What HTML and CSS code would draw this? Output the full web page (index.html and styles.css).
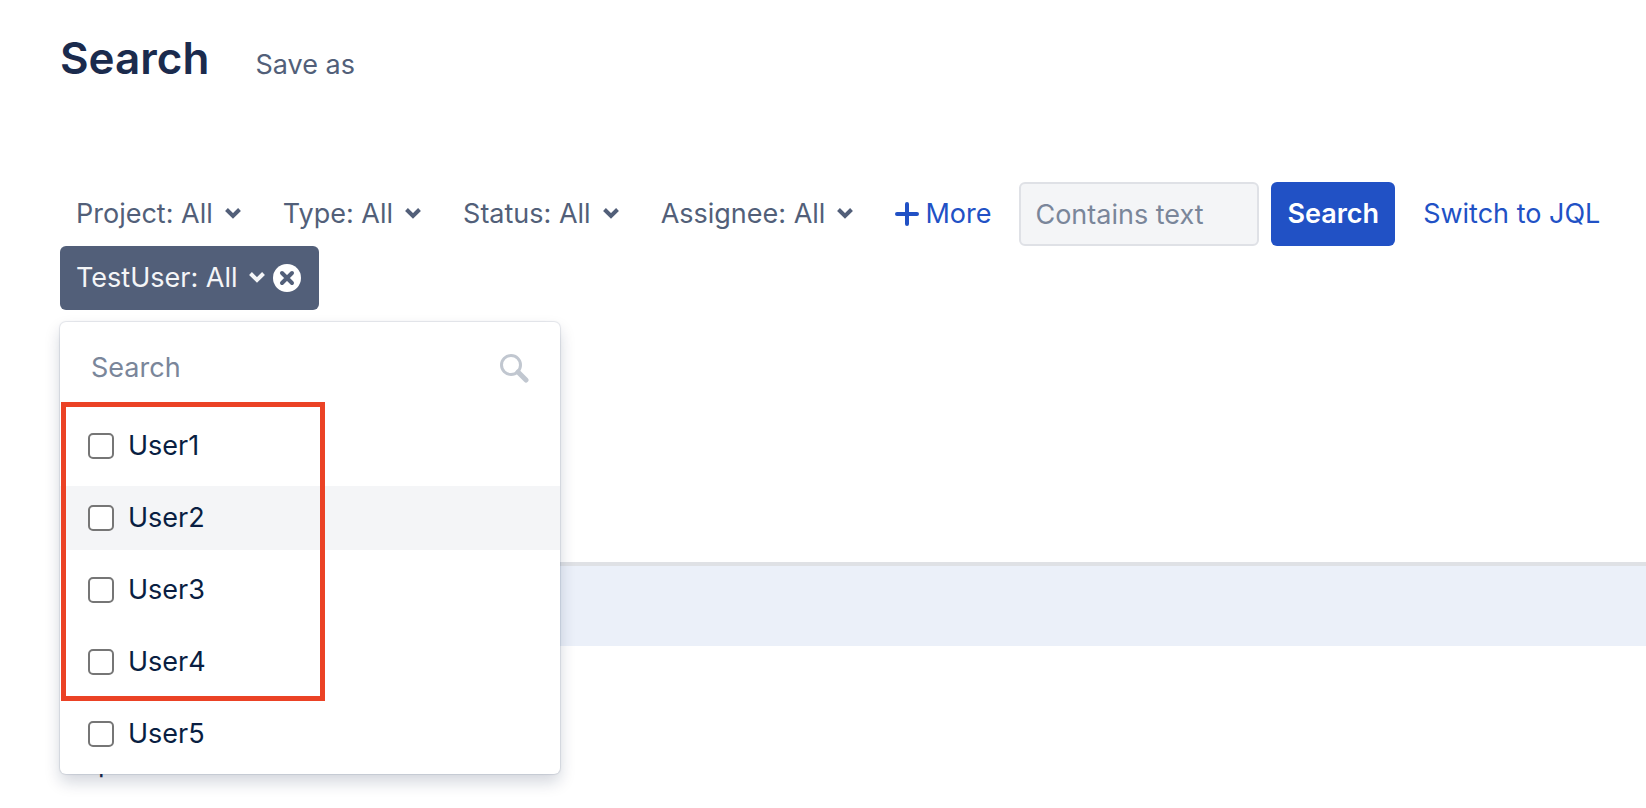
FILE: index.html
```
<!DOCTYPE html>
<html lang="en">
<head>
  <meta charset="UTF-8" />
  <meta name="viewport" content="width=device-width, initial-scale=1.0"/>
  <title>Search</title>
  <link rel="stylesheet" href="styles.css">
</head>
<body>
  <svg class="sprite" aria-hidden="true">
    <symbol id="chevron" viewBox="0 0 16 12">
      <path d="M1.5 1.5L8 8l6.500-6.500" fill="none" stroke="currentColor" stroke-width="4"/>
    </symbol>
  </svg>

  <header class="header">
    <h1>Search</h1>
    <button class="save-as" type="button">Save as</button>
  </header>

  <form class="filters">
    <button class="filter" type="button">Project: All <svg class="chevron"><use href="#chevron"/></svg></button>
    <button class="filter" type="button">Type: All <svg class="chevron"><use href="#chevron"/></svg></button>
    <button class="filter" type="button">Status: All <svg class="chevron"><use href="#chevron"/></svg></button>
    <button class="filter" type="button">Assignee: All <svg class="chevron"><use href="#chevron"/></svg></button>
    <button class="more" type="button">
      <svg class="plus" viewBox="0 0 24 24"><path d="M12 2v20M2 12h20" fill="none" stroke="currentColor" stroke-width="4" stroke-linecap="round"/></svg>
      More
    </button>
    <input class="text-query" type="text" placeholder="Contains text" aria-label="Contains text">
    <button class="search-btn" type="submit">Search</button>
    <a class="switch" href="#">Switch to JQL</a>
  </form>

  <div class="extra">
    <div class="filter active">
      <button class="active-label" type="button">TestUser: All <svg class="chevron"><use href="#chevron"/></svg></button>
      <button class="remove" type="button" aria-label="Remove filter">
        <svg viewBox="0 0 28 28"><circle cx="14" cy="14" r="14" fill="#fff"/><path d="M9 9l10 10M19 9L9 19" stroke="#525f79" stroke-width="4" stroke-linecap="round"/></svg>
      </button>
    </div>

    <div class="dropdown">
      <div class="lookup">
        <input type="text" placeholder="Search" aria-label="Search users">
        <svg class="magnifier" viewBox="0 0 30 30"><circle cx="12" cy="12" r="9.500" fill="none" stroke="#c1c7d0" stroke-width="3"/><path d="M19 19l8 8" stroke="#c1c7d0" stroke-width="5" stroke-linecap="round"/></svg>
      </div>
      <div class="options">
        <label class="option"><input type="checkbox"> User1</label>
        <label class="option hover"><input type="checkbox"> User2</label>
        <label class="option"><input type="checkbox"> User3</label>
        <label class="option"><input type="checkbox"> User4</label>
        <label class="option"><input type="checkbox"> User5</label>
        <div class="highlight"></div>
      </div>
    </div>
  </div>

  <main class="results">
    <div class="band"></div>
    <p class="result">Update</p>
  </main>
</body>
</html>
```

FILE: styles.css
```
* { box-sizing: border-box; }
body {
  margin: 0;
  min-height: 100vh;
  background: #fff;
  color: #091e42;
  font-family: Inter, "Liberation Sans", sans-serif;
  font-size: 27px;
  line-height: 32px;
}
button, input {
  font: inherit;
  color: inherit;
  margin: 0;
}
button {
  padding: 0;
  border: 0;
  background: none;
  cursor: pointer;
  white-space: nowrap;
}
.sprite {
  position: absolute;
  width: 0;
  height: 0;
}
.header {
  display: flex;
  align-items: baseline;
  gap: 46px;
  padding: 28px 60px 0;
  height: 182px;
}
h1 {
  margin: 0;
  font-size: 44px;
  line-height: 60px;
  font-weight: 600;
  color: #1b2b4d;
}
.save-as { color: #525f79; }

.filters {
  display: flex;
  align-items: center;
  padding: 0 40px 0 60px;
}
.filter {
  display: flex;
  align-items: center;
  height: 64px;
  padding: 0 16px;
  margin-right: 10px;
  gap: 12px;
  border-radius: 6px;
  color: #525f79;
}
.chevron {
  width: 16px;
  height: 12px;
}
.more {
  display: flex;
  align-items: center;
  gap: 6px;
  padding: 0 16px;
  height: 64px;
  color: #2151c5;
}
.plus {
  width: 24px;
  height: 24px;
}
.text-query {
  width: 240px;
  height: 64px;
  margin: 0 12px;
  padding: 0 14px;
  border: 2px solid #dfe1e6;
  border-radius: 6px;
  background: #f4f5f7;
}
input::placeholder {
  color: #7a869a;
  opacity: 1;
}
.search-btn {
  height: 64px;
  padding: 0 16px;
  border-radius: 6px;
  background: #2151c5;
  color: #fff;
  font-weight: 600;
}
.switch {
  margin-left: 28px;
  color: #2151c5;
  text-decoration: none;
  white-space: nowrap;
}

.extra {
  position: relative;
  display: flex;
  padding: 0 60px;
}
.active {
  gap: 8px;
  padding-right: 18px;
  background: #525f79;
  color: #f4f5f7;
}
.active-label {
  display: flex;
  align-items: center;
  gap: 12px;
}
.remove, .remove svg {
  display: block;
  width: 28px;
  height: 28px;
}

.dropdown {
  position: absolute;
  top: 76px;
  left: 60px;
  width: 500px;
  padding-bottom: 8px;
  border-radius: 6px;
  background: #fff;
  box-shadow: 0 0 1px 1px rgba(9, 30, 66, 0.1), 0 8px 16px rgba(9, 30, 66, 0.18);
}
.lookup {
  display: flex;
  align-items: center;
  height: 92px;
  padding: 0 31px;
}
.lookup input {
  flex: 1;
  min-width: 0;
  padding: 0;
  border: 0;
  background: none;
}
.magnifier {
  width: 30px;
  height: 30px;
}
.options {
  position: relative;
  display: grid;
  gap: 8px;
}
.option {
  display: flex;
  align-items: center;
  gap: 14px;
  height: 64px;
  padding: 0 28px;
}
.option.hover { background: #f4f5f7; }
.option input {
  appearance: none;
  width: 26px;
  height: 26px;
  border: 2px solid #767676;
  border-radius: 5px;
  background: #fff;
}
.highlight {
  position: absolute;
  top: -12px;
  left: 1px;
  width: 264px;
  height: 299px;
  border: 5px solid #eb4225;
}

.results { padding: 252px 0 30px 60px; }
.band {
  height: 84px;
  border-top: 4px solid #dfe1e5;
  background: #ebf0f9;
}
.result {
  margin: 0;
  padding: 101px 18px 0;
  color: #1b2b4d;
}
```
